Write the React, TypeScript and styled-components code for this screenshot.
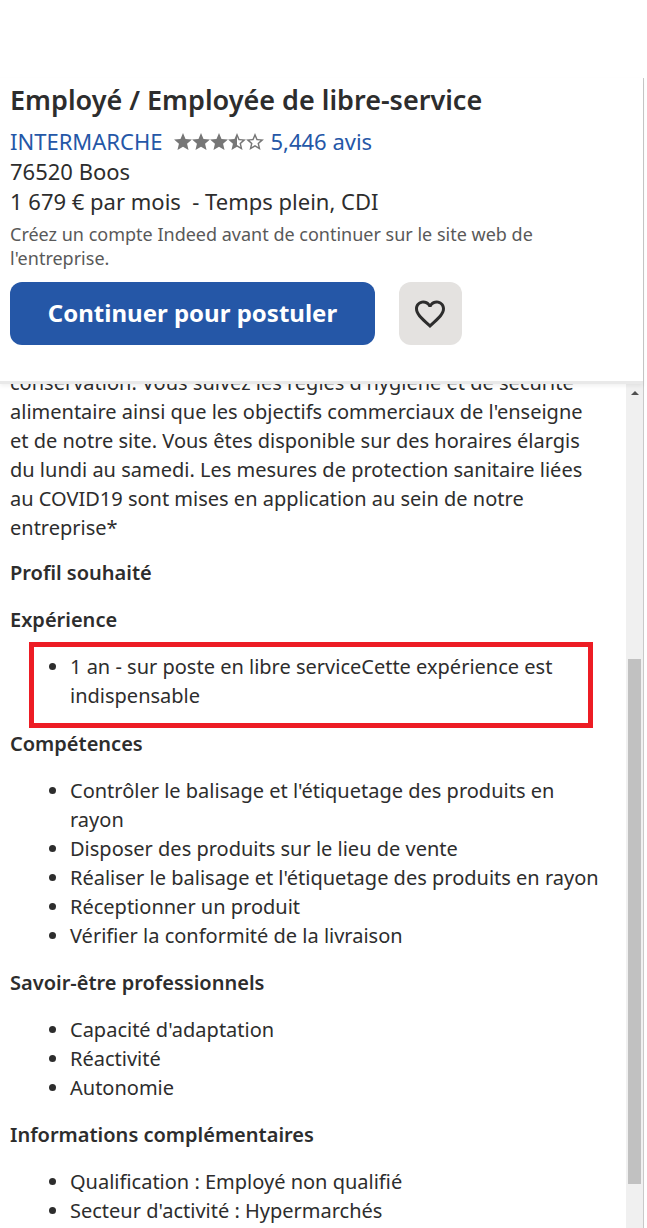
import React from "react";
import styled, { createGlobalStyle } from "styled-components";

const GlobalStyle = createGlobalStyle`
  *, *::before, *::after { box-sizing: border-box; }
  body {
    margin: 0;
    background: #fff;
    color: #2d2d2d;
    font-family: "Noto Sans", "Liberation Sans", sans-serif;
  }
`;

const Page = styled.div`
  display: flex;
  flex-direction: column;
  min-height: 100vh;
  padding: 78px 3px 0 0;
`;

const Panel = styled.main`
  display: flex;
  flex: 1;
  flex-direction: column;
  border-right: 1px solid #c9c9c9;
`;

const Header = styled.header`
  position: relative;
  padding: 4px 10px 36px;
  border-bottom: 3px solid #e9e9e9;
  background: #fff;
  box-shadow: 0 2px 4px rgba(0, 0, 0, 0.06);
`;

const Title = styled.h1`
  margin: 0 0 8px;
  font-size: 27px;
  line-height: 36px;
  font-weight: 650;
`;

const Line = styled.div`
  display: flex;
  align-items: center;
  font-size: 22px;
  line-height: 30px;
  white-space: pre-wrap;
`;

const Link = styled.a`
  color: #2557a7;
  text-decoration: none;
`;

const Stars = styled.span`
  display: flex;
  margin: 0 6px 0 12px;
  color: #767676;
`;

const Notice = styled.p`
  margin: 6px 0 12px;
  max-width: 560px;
  color: #595959;
  font-size: 18px;
  line-height: 24px;
`;

const Actions = styled.div`
  display: flex;
  gap: 24px;
`;

const Button = styled.button<{ $primary?: boolean }>`
  display: flex;
  align-items: center;
  justify-content: center;
  height: 63px;
  width: ${(p) => (p.$primary ? "365px" : "63px")};
  padding: ${(p) => (p.$primary ? "0 0 2px" : "0 1px 0 0")};
  border: 0;
  border-radius: 12px;
  background: ${(p) => (p.$primary ? "#2557a7" : "#e4e2e0")};
  color: ${(p) => (p.$primary ? "#fff" : "#2d2d2d")};
  font-family: inherit;
  font-size: 24px;
  font-weight: 700;
  cursor: pointer;
`;

const Viewport = styled.div`
  display: flex;
  flex: 1;
`;

const Description = styled.div`
  flex: 1;
  min-width: 0;
  padding: 0 20px 0 10px;
  margin-top: -16px;
  font-size: 20px;
  line-height: 29px;
`;

const Paragraph = styled.p`
  margin: 0 0 16px;
`;

const Heading = styled.h2`
  margin: 0 0 18px;
  font-size: 20px;
  line-height: 29px;
  font-weight: 650;
`;

const List = styled.ul`
  margin: 0 0 18px;
  padding-left: 60px;
`;

const Highlight = styled.div`
  margin: -10px 13px 1px 19px;
  padding: 5px 0 13px;
  border: 5px solid #ed1c24;

  ${List} {
    margin: 0;
    padding-left: 36px;
  }
`;

const ScrollTrack = styled.div`
  display: flex;
  flex: 0 0 17px;
  flex-direction: column;
  padding: 0 2px;
  background: #f0f0f0;
`;

const ScrollArrow = styled.svg`
  flex: none;
  width: 13px;
  height: 22px;
`;

const ScrollSpace = styled.div<{ $share: number }>`
  flex: ${(p) => p.$share} 1 0;
`;

const ScrollThumb = styled(ScrollSpace)`
  background: #c1c1c1;
`;

const STAR_FULL =
  "M12 17.27 18.18 21l-1.64-7.03L22 9.24l-7.19-.61L12 2 9.19 8.63 2 9.24l5.46 4.73L5.82 21z";
const STAR_HALF =
  "M22 9.24l-7.19-.62L12 2 9.19 8.63 2 9.24l5.46 4.73L5.82 21 12 17.27 18.18 21l-1.63-7.03L22 9.24zM12 15.4V6.1l1.71 4.04 4.38.38-3.32 2.88 1 4.28L12 15.4z";
const STAR_EMPTY =
  "M22 9.24l-7.19-.62L12 2 9.19 8.63 2 9.24l5.46 4.73L5.82 21 12 17.27 18.18 21l-1.63-7.03L22 9.24zM12 15.4l-3.76 2.27 1-4.28-3.32-2.88 4.38-.38L12 6.1l1.71 4.04 4.38.38-3.32 2.88 1 4.28L12 15.4z";

const rating = [STAR_FULL, STAR_FULL, STAR_FULL, STAR_HALF, STAR_EMPTY];

const sections = [
  {
    title: "Compétences",
    items: [
      "Contrôler le balisage et l'étiquetage des produits en rayon",
      "Disposer des produits sur le lieu de vente",
      "Réaliser le balisage et l'étiquetage des produits en rayon",
      "Réceptionner un produit",
      "Vérifier la conformité de la livraison",
    ],
  },
  {
    title: "Savoir-être professionnels",
    items: ["Capacité d'adaptation", "Réactivité", "Autonomie"],
  },
];

const extra = [
  "Qualification : Employé non qualifié",
  "Secteur d'activité : Hypermarchés",
];

const LastList = styled(List)`
  margin-bottom: 0;
`;

const toItems = (items: string[]) => items.map((item) => <li key={item}>{item}</li>);

export default function App() {
  return (
    <>
      <GlobalStyle />
      <Page>
        <Panel>
          <Header>
            <Title>Employé / Employée de libre-service</Title>
            <Line>
              <Link href="#entreprise">INTERMARCHE</Link>
              <Stars role="img" aria-label="3,5 sur 5">
                {rating.map((d, i) => (
                  <svg key={i} width="18" height="17" viewBox="2 2 20 19" aria-hidden="true">
                    <path d={d} fill="currentColor" />
                  </svg>
                ))}
              </Stars>
              <Link href="#avis">5,446 avis</Link>
            </Line>
            <Line>76520 Boos</Line>
            <Line>{"1 679 € par mois  - Temps plein, CDI"}</Line>
            <Notice>
              Créez un compte Indeed avant de continuer sur le site web de l'entreprise.
            </Notice>
            <Actions>
              <Button type="button" $primary>
                Continuer pour postuler
              </Button>
              <Button type="button" aria-label="Sauvegarder">
                <svg width="36" height="36" viewBox="0 0 24 24" aria-hidden="true">
                  <path
                    fill="currentColor"
                    d="M16.5 3c-1.74 0-3.41.81-4.5 2.09C10.91 3.81 9.24 3 7.5 3 4.42 3 2 5.42 2 8.5c0 3.78 3.4 6.86 8.55 11.54L12 21.35l1.45-1.32C18.6 15.36 22 12.28 22 8.5 22 5.42 19.58 3 16.5 3zm-4.4 15.55l-.1.1-.1-.1C7.14 14.24 4 11.39 4 8.5 4 6.5 5.5 5 7.5 5c1.54 0 3.04.99 3.57 2.36h1.87C13.46 5.99 14.96 5 16.5 5c2 0 3.5 1.5 3.5 3.5 0 2.89-3.14 5.74-7.9 10.05z"
                  />
                </svg>
              </Button>
            </Actions>
          </Header>
          <Viewport>
            <Description>
              <Paragraph>
                conservation. Vous suivez les règles d'hygiène et de sécurité alimentaire ainsi que
                les objectifs commerciaux de l'enseigne et de notre site. Vous êtes disponible sur
                des horaires élargis du lundi au samedi. Les mesures de protection sanitaire liées
                au COVID19 sont mises en application au sein de notre entreprise*
              </Paragraph>
              <Heading>Profil souhaité</Heading>
              <Heading>Expérience</Heading>
              <Highlight>
                <List>
                  <li>1 an - sur poste en libre serviceCette expérience est indispensable</li>
                </List>
              </Highlight>
              {sections.map((section) => (
                <React.Fragment key={section.title}>
                  <Heading>{section.title}</Heading>
                  <List>{toItems(section.items)}</List>
                </React.Fragment>
              ))}
              <Heading>Informations complémentaires</Heading>
              <LastList>{toItems(extra)}</LastList>
            </Description>
            <ScrollTrack aria-hidden="true">
              <ScrollArrow viewBox="0 0 13 22">
                <path d="M3 11h8L7 7z" fill="#505050" />
              </ScrollArrow>
              <ScrollSpace $share={253} />
              <ScrollThumb $share={525} />
              <ScrollSpace $share={44} />
            </ScrollTrack>
          </Viewport>
        </Panel>
      </Page>
    </>
  );
}
